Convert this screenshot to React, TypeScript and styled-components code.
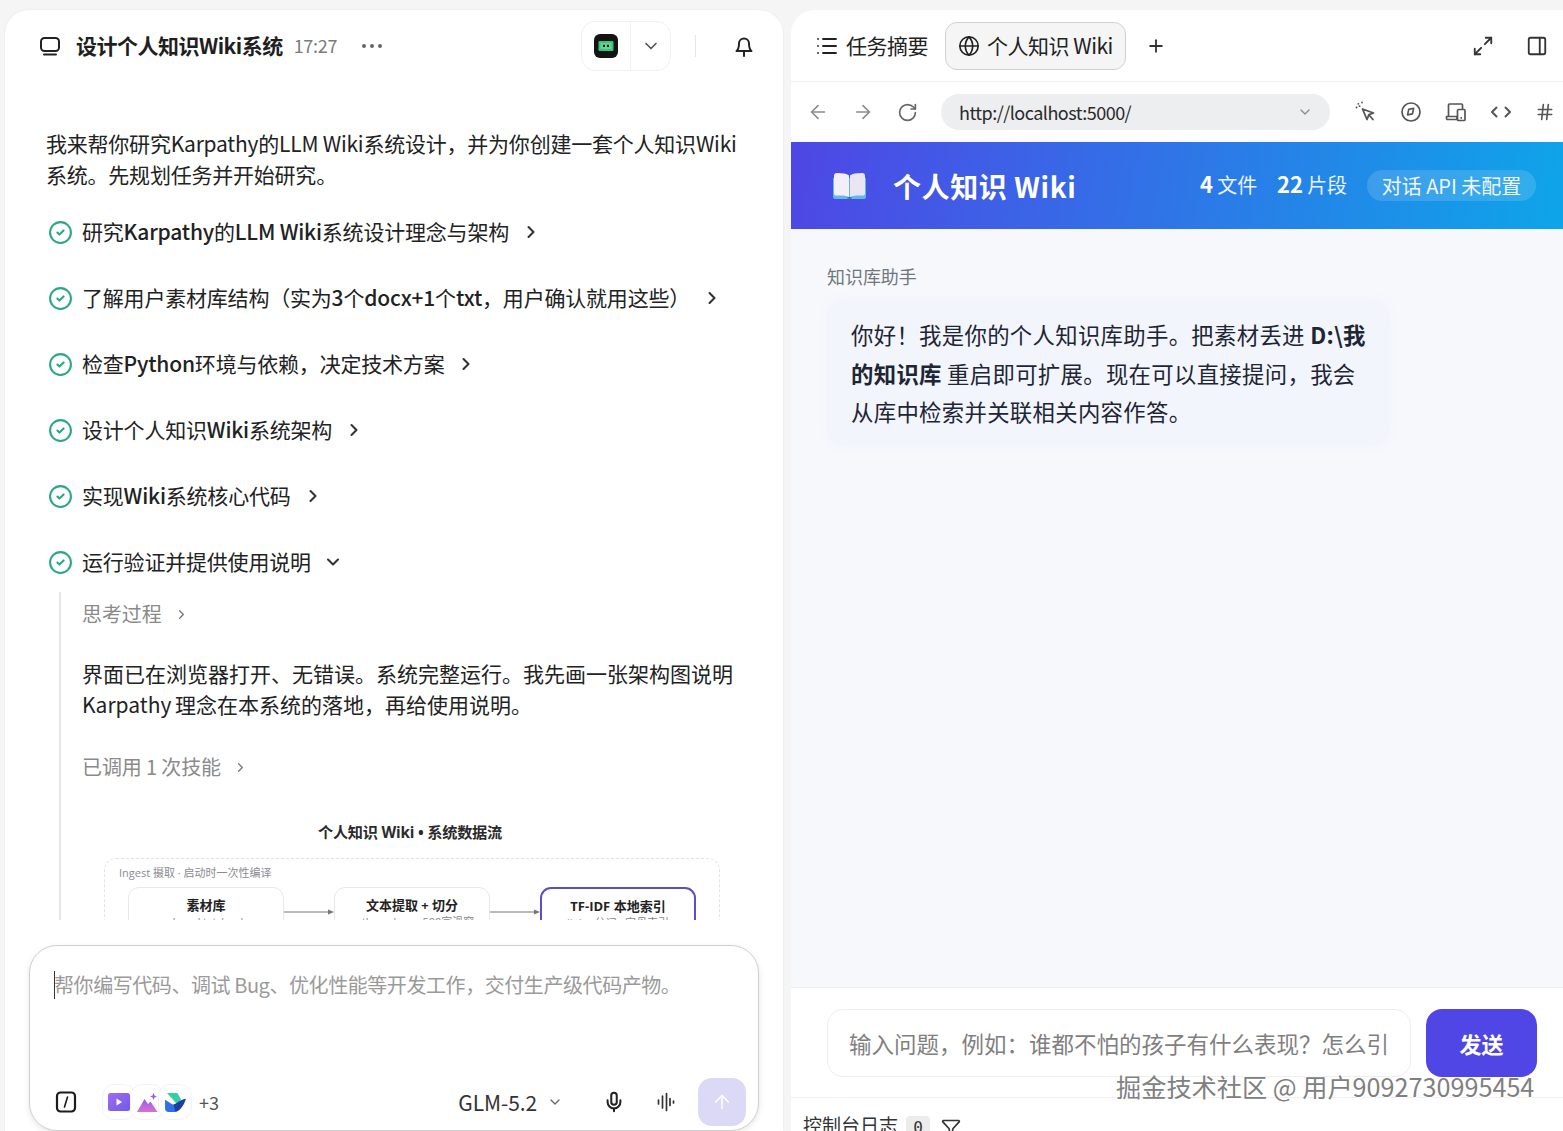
import React from "react";
import styled, { createGlobalStyle } from "styled-components";
import {
  ArrowLeft, ArrowRight, ArrowUp, ChevronDown, ChevronRight,
  CircleCheck, Funnel, Globe, Hash, List, Maximize2, Mic,
  PanelRight, Plus, RotateCw,
} from "lucide-react";

const GlobalStyle = createGlobalStyle`
  * { box-sizing: border-box; }
  html, body { margin: 0; height: 100%; overflow: hidden; }
  body {
    background: #f5f5f5;
    color: #1f1f1f;
    font-family: "Noto Sans CJK SC", "Noto Sans", sans-serif;
  }
`;

const Page = styled.div`
  position: relative;
  height: 1131px;
  overflow: hidden;
  display: grid;
  grid-template-columns: 778px 772px;
  column-gap: 8px;
  padding: 10px 0 0 5px;
`;

const LeftPanel = styled.section`
  background: #fff;
  border-radius: 24px 24px 0 0;
  box-shadow: 0 0 2px rgba(0, 0, 0, 0.08);
  display: flex;
  flex-direction: column;
  height: 1121px;
  overflow: hidden;
`;

const ChatHeader = styled.header`
  height: 72px;
  flex: none;
  display: flex;
  align-items: center;
  padding: 0 27px 0 34px;
`;

const Title = styled.h1`
  margin: 0 0 2px 15px;
  font-size: 21px;
  font-weight: 700;
  letter-spacing: -0.5px;
  white-space: nowrap;
`;

const Time = styled.span`
  margin: 0 0 2px 11px;
  font-size: 18px;
  color: #7b7b7b;
  letter-spacing: -0.3px;
`;

const MoreDots = styled.span`
  margin-left: 25px;
  display: flex;
  gap: 4px;
  & > i { width: 4px; height: 4px; border-radius: 50%; background: #666; display: block; }
`;

const ModelSwitch = styled.div`
  margin-left: auto;
  width: 90px;
  height: 50px;
  border: 1px solid #f1f1f1;
  border-radius: 14px;
  display: grid;
  grid-template-columns: 49px 1fr;
  align-items: stretch;
`;

const SwitchLogo = styled.div`
  display: flex;
  align-items: center;
  justify-content: center;
  border-right: 1px solid #f1f1f1;
`;

const SwitchChevron = styled.div`
  display: flex;
  align-items: center;
  justify-content: center;
  color: #555;
`;

const VDivider = styled.span`
  width: 1px;
  height: 22px;
  background: #e6e6e6;
  margin: 0 36px 0 24px;
`;

const Scroll = styled.div`
  flex: 1;
  min-height: 0;
  overflow: hidden;
  padding: 0 41px 0 41px;
`;

const Intro = styled.p`
  margin: 46px 0 27px;
  font-size: 21px;
  line-height: 31px;
  letter-spacing: -0.22px;
  color: #222;
`;

const TaskRow = styled.div`
  display: flex;
  align-items: center;
  height: 30px;
  margin-bottom: 36px;
  font-size: 21px;
  letter-spacing: -0.2px;
  color: #222;
  white-space: nowrap;
  & > svg:first-child { color: #2aa885; flex: none; margin: 0 9px 0 2px; }
  & > svg:last-child { color: #333; flex: none; margin-left: 12px; }
`;

const TaskLabel = styled.span`
  padding-bottom: 2px;
  & > b { font-weight: 500; }
`;

const Expanded = styled.div`
  margin: -21px 0 0 13px;
  padding: 7px 0 0 21px;
  border-left: 2px solid #e6e6e6;
  height: 340px;
  overflow: hidden;
`;

const Muted = styled.div`
  display: flex;
  align-items: center;
  gap: 12px;
  font-size: 20px;
  line-height: 30px;
  letter-spacing: -0.12px;
  color: #8a8a8a;
  & > svg { color: #777; }
`;

const Para = styled.p`
  margin: 29px 0 32px;
  font-size: 21px;
  line-height: 31px;
  letter-spacing: 0;
  word-spacing: -1px;
  color: #222;
`;

const Diagram = styled.div`
  margin: 40px 0 0 22px;
  width: 616px;
  font-family: "Open Sans", "Noto Sans CJK SC", sans-serif;
`;

const DiagramTitle = styled.div`
  text-align: center;
  font-size: 15.2px;
  font-weight: 700;
  line-height: 20px;
  color: #2a2a2a;
  letter-spacing: -0.2px;
  margin: 0 0 16px;
  padding-right: 4px;
`;

const Lane = styled.div`
  border: 1px dashed #e3e3e3;
  border-radius: 12px;
  padding: 5px 23px 20px;
`;

const LaneLabel = styled.div`
  margin-left: -9px;
  font-size: 11px;
  line-height: 18px;
  color: #8a8a92;
`;

const NodeRow = styled.div`
  margin-top: 5px;
  display: grid;
  grid-template-columns: 156px 50px 156px 50px 156px;
  align-items: center;
`;

const Node = styled.div<{ $accent?: boolean }>`
  height: 60px;
  border: ${(p) => (p.$accent ? "2px solid #5a4fc4" : "1px solid #e8e8e8")};
  border-radius: 11px;
  text-align: center;
  padding-top: 7px;
  background: #fff;
`;

const NodeTitle = styled.div`
  font-size: 13px;
  line-height: 20px;
  font-weight: 700;
  color: #222;
`;

const NodeSub = styled.div`
  font-size: 11px;
  line-height: 14px;
  color: #888;
`;

const Arrow = styled.svg`
  display: block;
  width: 50px;
  height: 8px;
  margin-top: -10px;
`;

const Composer = styled.div`
  flex: none;
  height: 186px;
  margin: 25px 24px 0;
  border: 1px solid #cfcfcf;
  border-radius: 28px;
  background: #fff;
  box-shadow: 0 2px 6px rgba(0, 0, 0, 0.1);
  display: flex;
  flex-direction: column;
  padding: 25px 12px 4px 24px;
`;

const ComposerText = styled.div`
  flex: 1;
  font-size: 20px;
  line-height: 28px;
  letter-spacing: -0.43px;
  color: #9a9a9a;
  white-space: nowrap;
  & > i {
    display: inline-block;
    width: 1px;
    height: 28px;
    background: #333;
    vertical-align: top;
    margin-right: -1px;
  }
`;

const ComposerBar = styled.div`
  display: flex;
  align-items: center;
  height: 48px;
`;

const Chips = styled.div`
  display: flex;
  margin-left: 24px;
`;

const Chip = styled.span`
  width: 34px;
  height: 36px;
  border: 1px solid #f3f3f3;
  border-radius: 12px;
  background: #fff;
  display: flex;
  align-items: center;
  justify-content: center;
  margin-right: -6px;
`;

const Count = styled.span`
  margin-left: 13px;
  font-size: 18px;
  color: #555;
`;

const ModelName = styled.span`
  margin-left: auto;
  font-size: 21px;
  color: #333;
  letter-spacing: -0.1px;
`;

const ModelChevron = styled.span`
  display: flex;
  color: #666;
  margin: 0 40px 0 10px;
`;

const BarIcon = styled.span`
  display: flex;
  color: #222;
  margin-right: 31px;
`;

const WaveIcon = styled(BarIcon)`
  margin-right: 22px;
  color: #333;
`;

const SendRound = styled.button`
  width: 48px;
  height: 48px;
  border: 0;
  padding: 0;
  border-radius: 14px;
  background: #dcd9f6;
  color: #fff;
  display: flex;
  align-items: center;
  justify-content: center;
`;

const RightPanel = styled.section`
  background: #fff;
  border-radius: 24px 0 0 0;
  display: flex;
  flex-direction: column;
  height: 1121px;
  overflow: hidden;
`;

const TabBar = styled.div`
  height: 72px;
  flex: none;
  display: flex;
  align-items: center;
  padding: 0 15px 0 24px;
  border-bottom: 1px solid #f0f0f0;
  font-size: 21px;
  letter-spacing: -0.5px;
`;

const Tab = styled.div<{ $active?: boolean }>`
  display: flex;
  align-items: center;
  height: 48px;
  gap: 7px;
  white-space: nowrap;
  color: #222;
  ${(p) =>
    p.$active
      ? `margin-left: 17px; width: 181px; padding-left: 12px; background: #f5f5f5; border: 1px solid #d0d0d0; border-radius: 12px;`
      : ""}
`;

const TabLabel = styled.span`
  padding-bottom: 2px;
`;

const TabPlus = styled.span`
  display: flex;
  margin-left: 20px;
  color: #333;
`;

const TabTools = styled.div`
  margin-left: auto;
  display: flex;
  align-items: center;
  gap: 32px;
  color: #333;
`;

const UrlBar = styled.div`
  height: 60px;
  flex: none;
  display: flex;
  align-items: center;
  padding: 0 6px 0 16px;
  color: #8a8a8a;
`;

const NavIcon = styled.span`
  display: flex;
  margin-right: 23px;
`;

const UrlField = styled.div`
  width: 389px;
  height: 36px;
  border-radius: 18px;
  background: #eceef0;
  display: flex;
  align-items: center;
  justify-content: space-between;
  padding: 0 17px 0 18px;
  font-size: 18px;
  letter-spacing: -0.52px;
  color: #2a2a2a;
  & > svg { color: #8c8c8c; }
`;

const UrlTools = styled.div`
  margin-left: 25px;
  display: grid;
  grid-template-columns: repeat(5, 22px);
  column-gap: 23px;
  color: #555;
  align-items: center;
`;

const Banner = styled.div`
  height: 87px;
  flex: none;
  background: linear-gradient(100deg, #4f46e5 0%, #0ea5e9 100%);
  display: flex;
  align-items: center;
  padding: 0 27px 0 42px;
  color: #fff;
  box-shadow: 0 2px 8px rgba(79, 70, 229, 0.12);
`;

const BannerTitle = styled.div`
  margin-left: 27px;
  font-size: 28px;
  font-weight: 700;
  letter-spacing: 0.6px;
  white-space: nowrap;
`;

const Stat = styled.span`
  font-size: 20px;
  color: #eaf3ff;
  white-space: nowrap;
  letter-spacing: -0.1px;
  padding-bottom: 6px;
  & > b { font-size: 22px; font-weight: 700; color: #fff; }
`;

const Stats = styled.div`
  margin-left: auto;
  display: flex;
  align-items: center;
  gap: 20px;
`;

const Pill = styled.span`
  height: 31px;
  width: 169px;
  border-radius: 16px;
  background: rgba(255, 255, 255, 0.14);
  display: flex;
  align-items: center;
  justify-content: center;
  font-size: 20px;
  letter-spacing: 0;
  color: #f2f7ff;
  white-space: nowrap;
`;

const ChatBody = styled.div`
  flex: 1;
  min-height: 0;
  background: #f6f8fc;
  border-bottom: 1px solid #e9ebef;
  padding: 33px 36px 0 36px;
`;

const Sender = styled.div`
  font-size: 18px;
  line-height: 28px;
  letter-spacing: -0.05px;
  color: #71767e;
`;

const Bubble = styled.div`
  margin-top: 10px;
  width: 563px;
  padding: 15px 24px 15px;
  background: #f3f5fd;
  border-radius: 16px;
  box-shadow: 0 0 10px rgba(243, 245, 253, 0.9);
  font-size: 22.4px;
  line-height: 38.5px;
  letter-spacing: 0.3px;
  color: #1e2533;
  & > b { font-weight: 700; }
`;

const InputRow = styled.div`
  height: 110px;
  flex: none;
  background: #fff;
  display: flex;
  align-items: flex-start;
  padding: 21px 26px 0 36px;
  gap: 15px;
  border-bottom: 1px solid #f0f0f0;
`;

const AskInput = styled.input`
  width: 584px;
  height: 68px;
  border: 1px solid #eeeeee;
  border-radius: 16px;
  background: #fff;
  padding: 0 20px 0 21px;
  font: inherit;
  font-size: 22.5px;
  outline: none;
  &::placeholder { color: #7f7f7f; opacity: 1; }
`;

const SendButton = styled.button`
  width: 111px;
  height: 68px;
  border: 0;
  border-radius: 16px;
  background: #4f46e5;
  color: #fff;
  font: inherit;
  font-size: 22px;
  font-weight: 700;
`;

const ConsoleBar = styled.div`
  flex: none;
  height: 33px;
  display: flex;
  align-items: flex-start;
  padding: 15px 0 0 12px;
  font-size: 19px;
  line-height: 24px;
  color: #333;
  white-space: nowrap;
`;

const CountBadge = styled.span`
  margin: 3px 0 0 8px;
  width: 24px;
  height: 24px;
  border-radius: 4px;
  background: #ececec;
  font-family: "DejaVu Sans Mono", monospace;
  font-size: 16px;
  display: flex;
  align-items: center;
  justify-content: center;
`;

const ConsoleFilter = styled.span`
  display: flex;
  margin: 5px 0 0 11px;
  color: #333;
`;

const Watermark = styled.div`
  position: absolute;
  left: 1116px;
  top: 1069px;
  font-size: 25.2px;
  line-height: 34px;
  color: #808080;
  text-shadow: 1px 1px 0 #fff, -1px -1px 0 rgba(255, 255, 255, 0.7);
  letter-spacing: 0;
  white-space: nowrap;
  pointer-events: none;
`;

const tasks = [
  <>研究<b>Karpathy</b>的<b>LLM Wiki</b>系统设计理念与架构</>,
  <>了解用户素材库结构（实为<b>3</b>个<b>docx+1</b>个<b>txt</b>，用户确认就用这些）</>,
  <>检查<b>Python</b>环境与依赖，决定技术方案</>,
  <>设计个人知识<b>Wiki</b>系统架构</>,
  <>实现<b>Wiki</b>系统核心代码</>,
];

const Check = () => <CircleCheck size={25} strokeWidth={2} />;

const LaptopIcon = () => (
  <svg width="22" height="22" viewBox="0 0 22 22" fill="none" stroke="#222" strokeWidth="2" strokeLinecap="round">
    <rect x="2" y="3" width="18" height="13" rx="3.5" />
    <path d="M5 19.5h12" />
  </svg>
);

const BellIcon = () => (
  <svg width="24" height="24" viewBox="0 0 24 24" fill="none" stroke="#222" strokeWidth="2" strokeLinejoin="round" strokeLinecap="round">
    <path d="M4.500 17c1.800-1.500 2.500-3.500 2.500-7.500a5 5 0 0 1 10 0c0 4 .7 6 2.500 7.500z" />
    <path d="M12 17v5" />
  </svg>
);

const TerminalLogo = () => (
  <svg width="24" height="24" viewBox="0 0 24 24">
    <rect width="24" height="24" rx="6" fill="#141414" />
    <rect x="4.500" y="7" width="15" height="10" rx="1" fill="#3fbf7a" />
    <rect x="6.500" y="9" width="11" height="6" fill="#57d98f" />
    <rect x="9" y="10.800" width="2" height="2.200" fill="#141414" />
    <rect x="13" y="10.800" width="2" height="2.200" fill="#141414" />
  </svg>
);

const BookIcon = () => (
  <svg width="33" height="28" viewBox="0 0 33 28">
    <path d="M0 6h33v19a2 2 0 0 1-2 2H2a2 2 0 0 1-2-2z" fill="#62b7ee" />
    <path d="M14.500 25h4v2h-4z" fill="#2c7cc7" />
    <path d="M1 4a3 3 0 0 1 3-3c5.500 0 9.500.7 12 2.500V25c-3-1.500-8-1.800-13-1.500-1.300 0-2-.6-2-1.800z" fill="#f2eff9" />
    <path d="M32 4a3 3 0 0 0-3-3c-5.500 0-9.500.7-12 2.500V25c3-1.500 8-1.800 13-1.500 1.300 0 2-.6 2-1.800z" fill="#e9e5f5" />
  </svg>
);

const SlashBox = () => (
  <svg width="24" height="24" viewBox="0 0 24 24" fill="none" stroke="#1c1c1c">
    <rect x="3" y="2.500" width="18" height="19" rx="3.500" strokeWidth="2.200" />
    <path d="M13.500 7l-3 10" strokeWidth="1.600" strokeLinecap="round" />
  </svg>
);

const Wave = () => (
  <svg width="20" height="20" viewBox="0 0 20 20" fill="none" stroke="currentColor" strokeWidth="1.700" strokeLinecap="round">
    <path d="M2.500 8v4M6.500 4v12M10.500 1.500v17M14 6.500v7M17.500 9v2" />
  </svg>
);

const ClickIcon = () => (
  <svg width="22" height="22" viewBox="0 0 22 22" fill="none" stroke="currentColor" strokeLinecap="round" strokeLinejoin="round">
    <path d="M7.500 8l11 4-4.600 1.700L12 18.500z" strokeWidth="1.800" />
    <path d="M14 14l4 4.500" strokeWidth="1.800" />
    <path d="M1.500 6.500h.1M3.300 2.800h.1M7 1.500v.1M4.500 5.200h.1" strokeWidth="1.800" />
  </svg>
);

const CompassIcon = () => (
  <svg width="22" height="22" viewBox="0 0 22 22" fill="none" stroke="currentColor" strokeWidth="1.700" strokeLinejoin="round">
    <circle cx="11" cy="11" r="9" />
    <path d="M8.600 8.800l5-1.200-1.200 5.800-5 1z" transform="translate(0.300 -0.200) scale(.98)" />
  </svg>
);

const DevicesIcon = () => (
  <svg width="22" height="22" viewBox="0 0 22 22" fill="none" stroke="currentColor" strokeWidth="1.700" strokeLinejoin="round">
    <path d="M3.500 15V4a1 1 0 0 1 1-1h12a1 1 0 0 1 1 1v4" />
    <path d="M1.500 15.500h10.500v3H2.500a1 1 0 0 1-1-1z" />
    <rect x="12.500" y="8.500" width="7.500" height="11" rx="1" />
    <path d="M15.500 16.800h1.500" />
  </svg>
);

const CodeIcon = () => (
  <svg width="22" height="22" viewBox="0 0 22 22" fill="none" stroke="currentColor" strokeWidth="2" strokeLinecap="round" strokeLinejoin="round">
    <path d="M6.500 6.500L2 11l4.500 4.500" />
    <path d="M15.500 6.500L20 11l-4.500 4.500" />
  </svg>
);

const VideoLogo = () => (
  <svg width="22" height="18" viewBox="0 0 22 18">
    <defs>
      <linearGradient id="vg" x1="0" y1="0" x2="1" y2="1">
        <stop offset="0" stopColor="#a06cf0" />
        <stop offset="1" stopColor="#6f5be8" />
      </linearGradient>
    </defs>
    <rect width="22" height="18" rx="2.500" fill="url(#vg)" />
    <path d="M8.500 5.500v7l5.500-3.500z" fill="#fff" />
  </svg>
);

const ImageLogo = () => (
  <svg width="21" height="19" viewBox="0 0 21 19">
    <defs>
      <linearGradient id="ig" x1="0" y1="0" x2="0" y2="1">
        <stop offset="0" stopColor="#a55be0" />
        <stop offset="1" stopColor="#d46fd8" />
      </linearGradient>
    </defs>
    <path d="M0 19L7.500 6l3.500 5 2.500-2.500L20.500 19z" fill="url(#ig)" />
    <path d="M16.500 0l1 2.500 2.500 1-2.500 1-1 2.500-1-2.500-2.500-1 2.500-1z" fill="#a55be0" />
  </svg>
);

const WingLogo = () => (
  <svg width="21" height="19" viewBox="0 0 22 20">
    <path d="M2 0h11l4 7-5 4z" fill="#35cfa4" />
    <path d="M0 7l8 5 6 0-3 8H4a4 4 0 0 1-4-4z" fill="#2f6fe8" />
    <path d="M9 12c4-1 6-5 13-6-2 6-5 12-11 14z" fill="#1c3f9e" />
  </svg>
);

const FlowArrow = () => (
  <Arrow viewBox="0 0 50 8">
    <path d="M0 4h44" stroke="#777" strokeWidth="1" />
    <path d="M44 1.500l6 2.500-6 2.500z" fill="#777" />
  </Arrow>
);

export default function App() {
  return (
    <>
      <GlobalStyle />
      <Page>
        <LeftPanel>
          <ChatHeader>
            <LaptopIcon />
            <Title>设计个人知识Wiki系统</Title>
            <Time>17:27</Time>
            <MoreDots><i /><i /><i /></MoreDots>
            <ModelSwitch>
              <SwitchLogo><TerminalLogo /></SwitchLogo>
              <SwitchChevron><ChevronDown size={20} /></SwitchChevron>
            </ModelSwitch>
            <VDivider />
            <BellIcon />
          </ChatHeader>
          <Scroll>
            <Intro>我来帮你研究Karpathy的LLM Wiki系统设计，并为你创建一套个人知识Wiki系统。先规划任务并开始研究。</Intro>
            {tasks.map((t, i) => (
              <TaskRow key={i}>
                <Check />
                <TaskLabel>{t}</TaskLabel>
                <ChevronRight size={20} strokeWidth={2.5} />
              </TaskRow>
            ))}
            <TaskRow>
              <Check />
              <TaskLabel>运行验证并提供使用说明</TaskLabel>
              <ChevronDown size={20} strokeWidth={2.5} />
            </TaskRow>
            <Expanded>
              <Muted>思考过程<ChevronRight size={15} /></Muted>
              <Para>界面已在浏览器打开、无错误。系统完整运行。我先画一张架构图说明 Karpathy 理念在本系统的落地，再给使用说明。</Para>
              <Muted>已调用 1 次技能<ChevronRight size={15} /></Muted>
              <Diagram>
                <DiagramTitle>个人知识 Wiki • 系统数据流</DiagramTitle>
                <Lane>
                  <LaneLabel>Ingest 摄取 · 启动时一次性编译</LaneLabel>
                  <NodeRow>
                    <Node>
                      <NodeTitle>素材库</NodeTitle>
                      <NodeSub>docx / txt / md</NodeSub>
                    </Node>
                    <FlowArrow />
                    <Node>
                      <NodeTitle>文本提取 + 切分</NodeTitle>
                      <NodeSub>python-docx · 500字滑窗</NodeSub>
                    </Node>
                    <FlowArrow />
                    <Node $accent>
                      <NodeTitle>TF-IDF 本地索引</NodeTitle>
                      <NodeSub>jieba 分词 · 字母索引</NodeSub>
                    </Node>
                  </NodeRow>
                </Lane>
              </Diagram>
            </Expanded>
          </Scroll>
          <Composer>
            <ComposerText><i />帮你编写代码、调试 Bug、优化性能等开发工作，交付生产级代码产物。</ComposerText>
            <ComposerBar>
              <SlashBox />
              <Chips>
                <Chip><VideoLogo /></Chip>
                <Chip><ImageLogo /></Chip>
                <Chip><WingLogo /></Chip>
              </Chips>
              <Count>+3</Count>
              <ModelName>GLM-5.2</ModelName>
              <ModelChevron><ChevronDown size={16} /></ModelChevron>
              <BarIcon><Mic size={22} strokeWidth={2.2} /></BarIcon>
              <WaveIcon><Wave /></WaveIcon>
              <SendRound aria-label="send"><ArrowUp size={22} strokeWidth={1.6} /></SendRound>
            </ComposerBar>
          </Composer>
        </LeftPanel>
        <RightPanel>
          <TabBar>
            <Tab><List size={24} strokeWidth={1.8} /><TabLabel>任务摘要</TabLabel></Tab>
            <Tab $active><Globe size={22} strokeWidth={1.8} /><TabLabel>个人知识 Wiki</TabLabel></Tab>
            <TabPlus><Plus size={20} strokeWidth={2.2} /></TabPlus>
            <TabTools>
              <Maximize2 size={22} strokeWidth={2} />
              <PanelRight size={22} strokeWidth={2} />
            </TabTools>
          </TabBar>
          <UrlBar>
            <NavIcon><ArrowLeft size={22} strokeWidth={1.7} /></NavIcon>
            <NavIcon><ArrowRight size={22} strokeWidth={1.7} /></NavIcon>
            <NavIcon><RotateCw size={21} strokeWidth={1.9} color="#666" /></NavIcon>
            <UrlField>
              http://localhost:5000/
              <ChevronDown size={16} />
            </UrlField>
            <UrlTools>
              <ClickIcon />
              <CompassIcon />
              <DevicesIcon />
              <CodeIcon />
              <Hash size={20} strokeWidth={2} />
            </UrlTools>
          </UrlBar>
          <Banner>
            <BookIcon />
            <BannerTitle>个人知识 Wiki</BannerTitle>
            <Stats>
              <Stat><b>4</b> 文件</Stat>
              <Stat><b>22</b> 片段</Stat>
              <Pill>对话 API 未配置</Pill>
            </Stats>
          </Banner>
          <ChatBody>
            <Sender>知识库助手</Sender>
            <Bubble>
              你好！我是你的个人知识库助手。把素材丢进 <b>D:\我的知识库</b> 重启即可扩展。现在可以直接提问，我会从库中检索并关联相关内容作答。
            </Bubble>
          </ChatBody>
          <InputRow>
            <AskInput placeholder="输入问题，例如：谁都不怕的孩子有什么表现？怎么引导？" />
            <SendButton>发送</SendButton>
          </InputRow>
          <ConsoleBar>
            控制台日志
            <CountBadge>0</CountBadge>
            <ConsoleFilter><Funnel size={20} strokeWidth={2} /></ConsoleFilter>
          </ConsoleBar>
        </RightPanel>
        <Watermark>掘金技术社区 @ 用户9092730995454</Watermark>
      </Page>
    </>
  );
}
